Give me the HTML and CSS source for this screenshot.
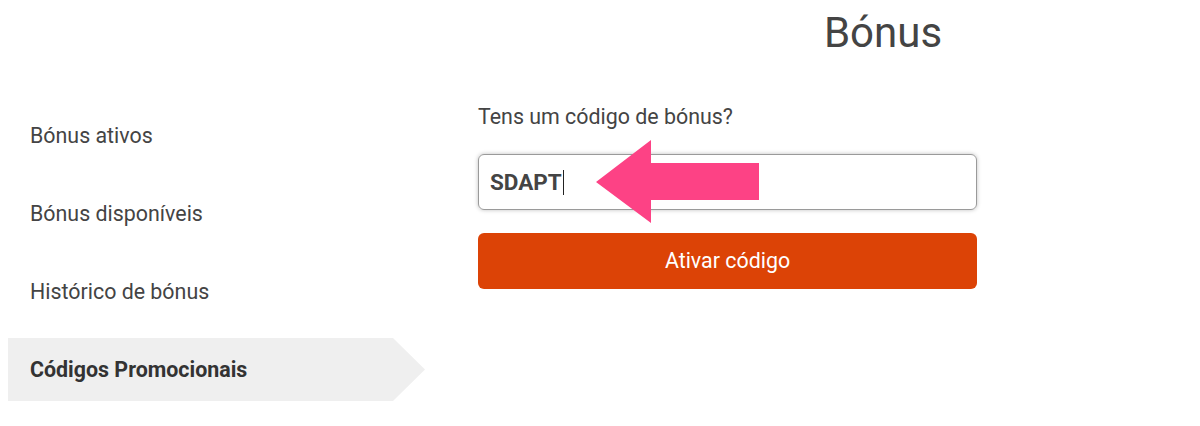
FILE: index.html
```html
<!DOCTYPE html>
<html>
<head>
    <title>Bónus</title>
    <link rel="stylesheet" href="styles.css">
</head>
<body>
    <div class="page">
        <h1 class="page-title">Bónus</h1>

        <div class="layout">
            <ul class="side-menu">
                <li class="menu-item">Bónus ativos</li>
                <li class="menu-item">Bónus disponíveis</li>
                <li class="menu-item">Histórico de bónus</li>
                <li class="menu-item active">Códigos Promocionais</li>
            </ul>

            <div class="promo">
                <div class="promo-label">Tens um código de bónus?</div>
                <div class="code-field">
                    <div class="code-input"><span class="code-text">SDAPT</span><span class="caret"></span></div>
                    <!-- annotation arrow -->
                    <svg class="pointer" width="163" height="83" viewBox="0 0 163 83">
                        <polygon points="0,42 55,0 55,23 163,23 163,60 55,60 55,83" fill="#fd4285"/>
                    </svg>
                </div>
                <button class="activate-btn">Ativar código</button>
            </div>
        </div>
    </div>
</body>
</html>
```

FILE: styles.css
```css
body {
    margin: 0;
    font-family: Roboto, "Liberation Sans", Arial, sans-serif;
    background-color: #fff;
    color: #444;
}

.page {
    padding-top: 8px;
}

.page-title {
    margin: 0;
    padding-left: 566px;
    text-align: center;
    font-size: 42px;
    font-weight: normal;
    line-height: 50px;
    color: #444;
}

.layout {
    display: flex;
    margin-top: 46px;
}

.side-menu {
    list-style: none;
    margin: 0 0 0 8px;
    padding: 0;
    width: 417px;
    display: flex;
    flex-direction: column;
    gap: 15px;
}

.menu-item {
    height: 63px;
    display: flex;
    align-items: center;
    padding-left: 22px;
    font-size: 21.4px;
    color: #444;
}

.menu-item.active {
    background-color: #efefef;
    font-weight: bold;
    color: #333;
    clip-path: polygon(0 0, 385px 0, 100% 50%, 385px 100%, 0 100%);
}

.promo {
    margin-left: 53px;
    width: 499px;
}

.promo-label {
    font-size: 21.4px;
    line-height: 25px;
    color: #444;
}

.code-field {
    position: relative;
    margin-top: 25px;
}

.code-input {
    height: 54px;
    border: 1px solid #9a9a9a;
    border-radius: 6px;
    box-shadow: 0 0 4px rgba(0,0,0,0.25);
    display: flex;
    align-items: center;
    padding-left: 11px;
    font-size: 22.5px;
    font-weight: bold;
    color: #444;
}

.caret {
    display: inline-block;
    width: 1px;
    height: 25px;
    margin-left: 1px;
    background-color: #222;
}

.pointer {
    position: absolute;
    left: 118px;
    top: -14px;
}

.activate-btn {
    display: block;
    width: 100%;
    height: 56px;
    margin-top: 23px;
    padding-bottom: 2px;
    border: none;
    border-radius: 6px;
    background-color: #dc4306;
    color: #fff;
    font-family: inherit;
    font-size: 21.4px;
}
```
